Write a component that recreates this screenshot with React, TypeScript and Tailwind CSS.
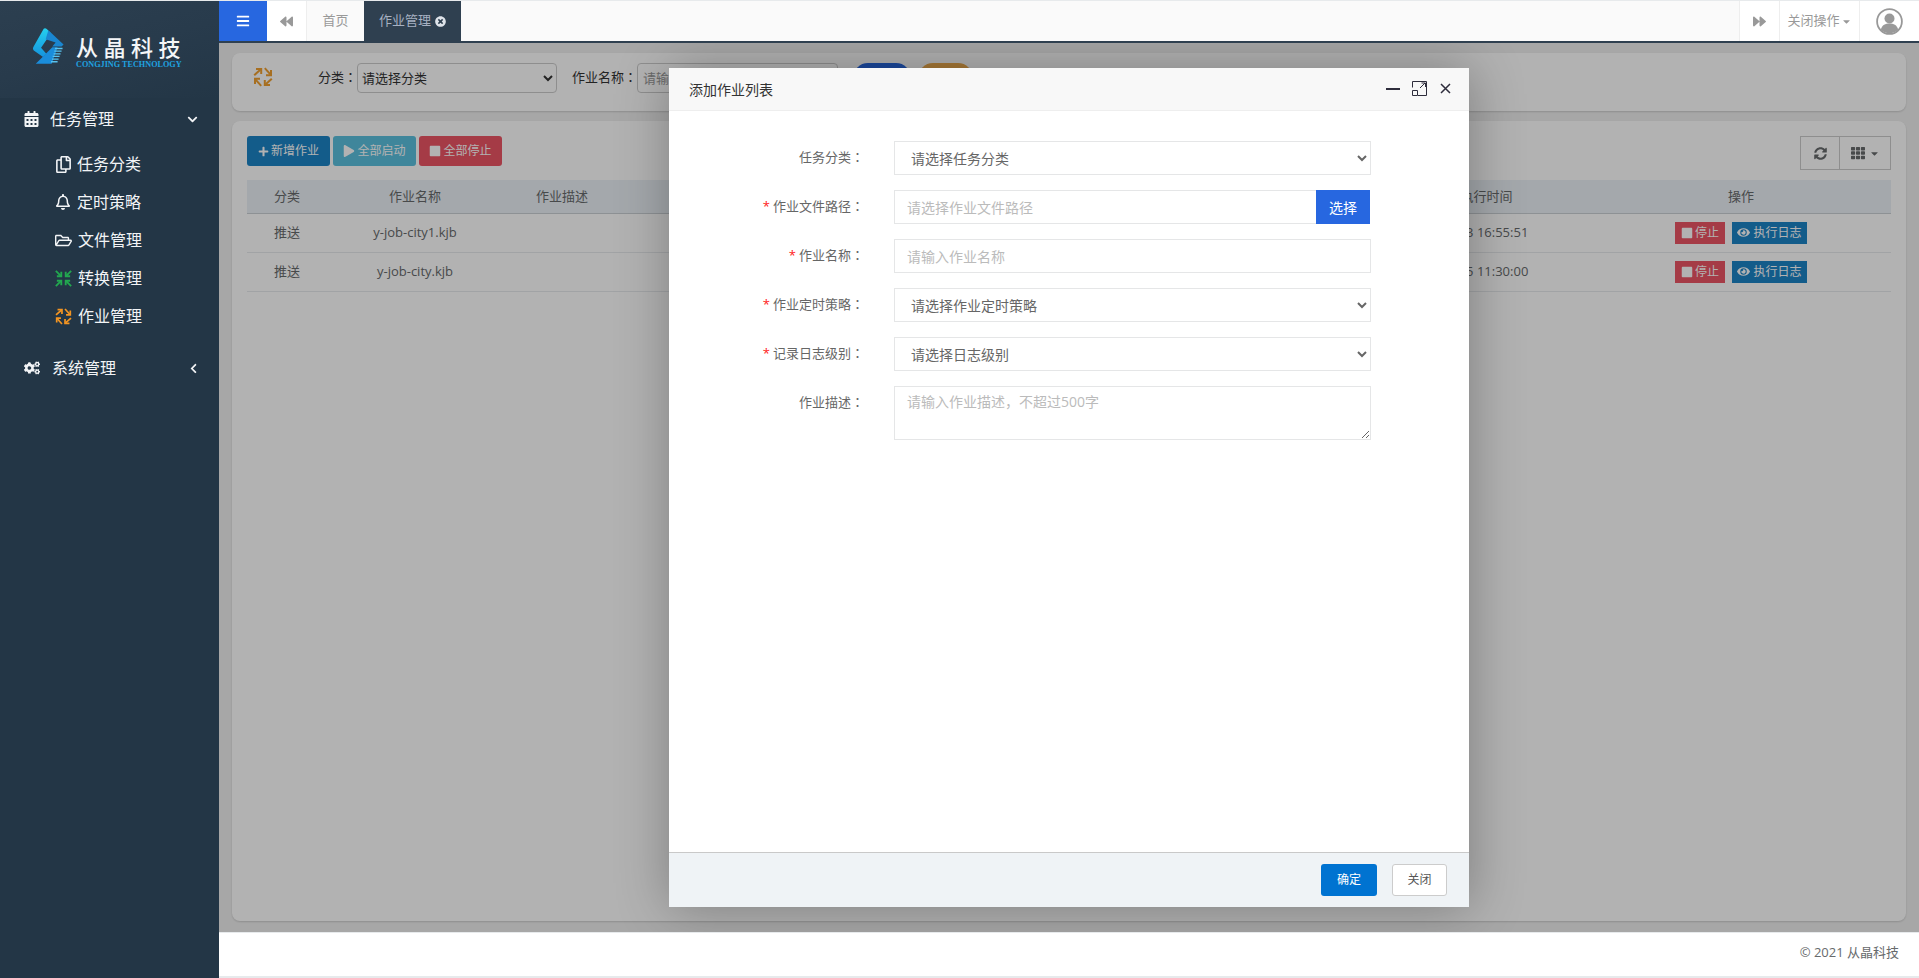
import {
  FaBackward,
  FaBars,
  FaCalendarAlt,
  FaCaretDown,
  FaChevronDown,
  FaChevronLeft,
  FaCogs,
  FaEye,
  FaForward,
  FaPlay,
  FaPlus,
  FaRegBell,
  FaRegCopy,
  FaRegFolderOpen,
  FaStop,
  FaSyncAlt,
  FaTh,
  FaTimesCircle,
} from 'react-icons/fa'

const font = '[font-family:"Open_Sans","Noto_Sans_CJK_SC",sans-serif]'

function Colon() {
  return <span className='[font-family:"Noto_Sans_CJK_TC",sans-serif]'>：</span>
}

function PinwheelIcon({ size, color }: { size: number; color: string }) {
  return (
    <svg width={size} height={size} viewBox="0 0 20 20" fill="none" stroke={color} strokeWidth="2">
      {[0, 90, 180, 270].map(r => (
        <g key={r} transform={`rotate(${r} 10 10)`}>
          <path d="M1.2 8.2 7.6 2.4" />
          <path d="M3 2H8.2V7" />
        </g>
      ))}
    </svg>
  )
}

function CompressIcon({ size, color }: { size: number; color: string }) {
  return (
    <svg width={size} height={size} viewBox="0 0 20 20" fill="none" stroke={color} strokeWidth="2.2">
      {[0, 90, 180, 270].map(r => (
        <g key={r} transform={`rotate(${r} 10 10)`}>
          <path d="M1 1 7.4 7.4" />
          <path d="M7.4 2.2V7.4H2.2" />
        </g>
      ))}
    </svg>
  )
}

function Logo() {
  return (
    <svg width="34" height="41" viewBox="12 10 100 124" className="shrink-0">
      <defs>
        <linearGradient id="logoTop" x1="0" y1="0" x2="0" y2="1">
          <stop offset="0" stopColor="#25d0ee" />
          <stop offset="1" stopColor="#1593dd" />
        </linearGradient>
      </defs>
      <path d="M46 12Q51 9 56 14L68 26 38 70 54 88 44 98 16 78Q11 72 16 65Z" fill="url(#logoTop)" />
      <path d="M60 17 106 60 100 66H72L82 54 52 44Z" fill="#1a86d0" />
      <path d="M72 68H88L70 118H22Z" fill="#1a8ddb" />
      <path d="M80 72H103M78 80H100M76 88H97M73 96H94M71 104H91M68 112H88" stroke="#58c2ee" strokeWidth="4" />
    </svg>
  )
}

function SideItem({ icon, label, textClass }: { icon: React.ReactNode; label: string; textClass: string }) {
  return (
    <div className="flex h-[38px] items-center pl-[55px] text-[16px] text-[#f2f4f6]">
      <span className="flex w-[17px] justify-start">{icon}</span>
      <span className={textClass}>{label}</span>
    </div>
  )
}

function Sidebar() {
  return (
    <aside className="w-[219px] shrink-0 bg-[#233646]">
      <div className="flex h-[97px] bg-[linear-gradient(165deg,#2c3f50_0%,#283b4c_50%,#233646_100%)] pl-[32px] pt-[27px]">
        <Logo />
        <div className="ml-[10px] mt-[8px]">
          <div className="text-[22px] leading-[22px] font-medium tracking-[5.5px] whitespace-nowrap text-[#f4f6f8]">从晶科技</div>
          <div className="mt-[3px] text-[8.2px] leading-[8px] font-bold whitespace-nowrap text-[#1fa3e0] [font-family:'Liberation_Serif',serif]">
            CONGJING TECHNOLOGY
          </div>
        </div>
      </div>
      <div className="flex h-[42px] items-center pl-[24px] pr-[21px] text-[16px] text-[#f2f4f6]">
        <FaCalendarAlt size={16} className="w-[15px]" />
        <span className="ml-[11px] flex-1">任务管理</span>
        <FaChevronDown size={11} />
      </div>
      <div className="mt-[5px]">
        <SideItem icon={<FaRegCopy size={17} />} label="任务分类" textClass="ml-[5px]" />
        <SideItem icon={<FaRegBell size={16} />} label="定时策略" textClass="ml-[5px]" />
        <SideItem icon={<FaRegFolderOpen size={17} />} label="文件管理" textClass="ml-[6px]" />
        <SideItem icon={<CompressIcon size={17} color="#22a84f" />} label="转换管理" textClass="ml-[6px]" />
        <SideItem icon={<PinwheelIcon size={17} color="#f39522" />} label="作业管理" textClass="ml-[6px]" />
      </div>
      <div className="mt-[12px] flex h-[42px] items-center pl-[24px] pr-[20px] text-[16px] text-[#f2f4f6]">
        <FaCogs size={16} />
        <span className="ml-[12px] flex-1">系统管理</span>
        <FaChevronLeft size={11} />
      </div>
    </aside>
  )
}

function TopBar() {
  return (
    <header className="flex h-[42px] shrink-0 border-b-2 border-[#2f4050] bg-[#fafafa] text-[13px]">
      <div className="flex w-[48px] items-center justify-center bg-[#2767e0] text-white">
        <FaBars size={14} />
      </div>
      <div className="flex w-[40px] items-center justify-center border-r border-[#eeeeee] bg-white text-[#999999]">
        <FaBackward size={13} />
      </div>
      <div className="flex w-[57px] items-center justify-center text-[#999999]">首页</div>
      <div className="flex w-[97px] items-center justify-center gap-[4px] bg-[#2f4050] text-[#a7b1c2]">
        作业管理
        <FaTimesCircle size={11} className="text-[#dfe4ea]" />
      </div>
      <div className="flex-1" />
      <div className="flex w-[40px] items-center justify-center border-l border-[#eeeeee] bg-white text-[#999999]">
        <FaForward size={13} />
      </div>
      <div className="flex w-[80px] items-center justify-center gap-[1px] border-l border-[#eeeeee] bg-white text-[#999999]">
        关闭操作
        <FaCaretDown size={11} />
      </div>
      <div className="flex w-[60px] items-center justify-center border-l border-[#eeeeee] bg-white">
        <svg width="27" height="27" viewBox="0 0 27 27">
          <circle cx="13.5" cy="13.5" r="12.4" fill="#fff" stroke="#999" strokeWidth="1.8" />
          <circle cx="13.5" cy="10.5" r="5" fill="#999" />
          <path d="M4.8 21.5C6 17 9.5 15.5 13.5 15.5S21 17 22.2 21.5C20 24 17 25.2 13.5 25.2S7 24 4.8 21.5Z" fill="#999" />
        </svg>
      </div>
    </header>
  )
}

function ToolBtn({ icon, label, color }: { icon: React.ReactNode; label: string; color: string }) {
  return (
    <button className={`flex h-[30px] w-[83px] items-center justify-center gap-[2px] rounded-[3px] text-[12px] text-white ${color}`}>
      {icon}
      {label}
    </button>
  )
}

const rows = [
  { type: '推送', name: 'y-job-city1.kjb', time: '2021-03-23 16:55:51' },
  { type: '推送', name: 'y-job-city.kjb', time: '2021-03-25 11:30:00' },
]

function JobTable() {
  return (
    <table className="w-full table-fixed text-center text-[13px] text-[#676a6c]">
      <colgroup>
        <col className="w-[80px]" />
        <col className="w-[176px]" />
        <col className="w-[118px]" />
        <col />
        <col className="w-[248px]" />
        <col className="w-[300px]" />
      </colgroup>
      <thead>
        <tr className="h-[33px] border-b border-[#cbd0d4] bg-[#ebf1f6]">
          <th className="font-normal">分类</th>
          <th className="font-normal">作业名称</th>
          <th className="font-normal">作业描述</th>
          <th className="font-normal" />
          <th className="font-normal">上一次执行时间</th>
          <th className="font-normal">操作</th>
        </tr>
      </thead>
      <tbody>
        {rows.map(r => (
          <tr key={r.name} className="h-[39px] border-b border-[#e7eaec]">
            <td>{r.type}</td>
            <td>{r.name}</td>
            <td />
            <td />
            <td>{r.time}</td>
            <td>
              <div className="flex justify-center gap-[7px] text-[12px] text-white">
                <span className="flex h-[22px] w-[50px] items-center justify-center gap-[2px] bg-[#ed5565]">
                  <FaStop size={12} />
                  停止
                </span>
                <span className="flex h-[22px] w-[75px] items-center justify-center gap-[3px] bg-[#1c84c6]">
                  <FaEye size={13} />
                  执行日志
                </span>
              </div>
            </td>
          </tr>
        ))}
      </tbody>
    </table>
  )
}

function Content() {
  return (
    <div className="flex h-full flex-col gap-[10px] bg-[#f0f0f0] pb-[11px] pl-[13px] pr-[13px] pt-[10px]">
      <section className="flex h-[58px] shrink-0 items-start rounded-[8px] bg-white pl-[20px] pt-[10px] text-[13px] text-[#333333] shadow-[0_1px_2px_rgba(0,0,0,0.15)]">
        <span className="mt-[4px] ml-px">
          <PinwheelIcon size={20} color="#f0a030" />
        </span>
        <label className="ml-[45px] leading-[27px]">分类<Colon /></label>
        <select className="h-[30px] w-[200px] rounded-[4px] border border-[#cccccc] bg-white text-[13px]">
          <option>请选择分类</option>
        </select>
        <label className="ml-[15px] leading-[27px]">作业名称<Colon /></label>
        <input placeholder="请输入作业名称" className="h-[30px] w-[201px] rounded-[4px] border border-[#cccccc] px-[5px] placeholder:text-[#999999]" />
        <div className="ml-[15px] h-[30px] w-[58px] rounded-[15px] bg-[#2767e0]" />
        <div className="ml-[7px] h-[30px] w-[55px] rounded-[15px] bg-[#f0ad4e]" />
      </section>
      <section className="min-h-0 flex-1 rounded-[8px] bg-white px-[15px] pt-[15px] shadow-[0_1px_2px_rgba(0,0,0,0.15)]">
        <div className="mb-[10px] flex h-[34px] items-start justify-between">
          <div className="flex gap-[3px]">
            <ToolBtn icon={<FaPlus size={11} />} label="新增作业" color="bg-[#1c84c6]" />
            <ToolBtn icon={<FaPlay size={12} />} label="全部启动" color="bg-[#5bc0de]" />
            <ToolBtn icon={<FaStop size={12} />} label="全部停止" color="bg-[#ed5565]" />
          </div>
          <div className="flex h-[34px] border border-[#cccccc] text-[#676a6c]">
            <div className="flex w-[39px] items-center justify-center border-r border-[#cccccc]">
              <FaSyncAlt size={13} />
            </div>
            <div className="flex w-[50px] items-center justify-center gap-[4px]">
              <FaTh size={14} />
              <FaCaretDown size={11} />
            </div>
          </div>
        </div>
        <JobTable />
      </section>
    </div>
  )
}

function Field({ label, required, children }: { label: string; required?: boolean; children: React.ReactNode }) {
  return (
    <div className="mb-[15px] flex">
      <label className="w-[195px] text-right text-[13px] leading-[31px] text-[#666666]">
        {required && <span className="mr-[3px] text-[#ff2020]">*</span>}
        {label}
        <Colon />
      </label>
      <div className="ml-[30px] w-[477px]">{children}</div>
    </div>
  )
}

const fieldClass = 'block h-[34px] w-full border border-[#e5e6e7] bg-white text-[14px] text-[#666666]'

function JobModal() {
  return (
    <div className="absolute left-[450px] top-[25px] flex h-[839px] w-[800px] flex-col bg-white shadow-[1px_1px_50px_rgba(0,0,0,0.3)]">
      <div className="flex h-[43px] shrink-0 items-center border-b border-[#eeeeee] bg-[#f8f8f8] pl-[20px] pr-[18px] text-[14px] text-[#333333]">
        <span className="flex-1">添加作业列表</span>
        <svg width="66" height="16" viewBox="0 0 66 16" fill="none" stroke="#2e2d3c">
          <path d="M1 8H15" strokeWidth="2" />
          <path d="M27.5 6.5V.5H41.5V14.5H33M27.5 9.5H32.5V14.5H27.5ZM35 7 40 2M36.5 2H40.5V6" strokeWidth="1" />
          <path d="M56 3 65 12M65 3 56 12" strokeWidth="1.5" />
        </svg>
      </div>
      <div className="flex-1 pt-[30px]">
        <Field label="任务分类">
          <select className={`${fieldClass} px-[12px]`}>
            <option>请选择任务分类</option>
          </select>
        </Field>
        <Field label="作业文件路径" required>
          <div className="flex w-[476px]">
            <input placeholder="请选择作业文件路径" className="h-[34px] min-w-0 flex-1 border border-r-0 border-[#e5e6e7] px-[12px] text-[14px] placeholder:text-[#bbbbbb]" />
            <button className="h-[34px] w-[54px] bg-[#2767e0] text-[14px] text-white">选择</button>
          </div>
        </Field>
        <Field label="作业名称" required>
          <input placeholder="请输入作业名称" className={`${fieldClass} px-[12px] placeholder:text-[#bbbbbb]`} />
        </Field>
        <Field label="作业定时策略" required>
          <select className={`${fieldClass} px-[12px]`}>
            <option>请选择作业定时策略</option>
          </select>
        </Field>
        <Field label="记录日志级别" required>
          <select className={`${fieldClass} px-[12px]`}>
            <option>请选择日志级别</option>
          </select>
        </Field>
        <Field label="作业描述">
          <textarea placeholder="请输入作业描述，不超过500字" className="block h-[54px] w-full border border-[#e5e6e7] px-[12px] py-[4px] text-[14px] placeholder:text-[#bbbbbb]" />
        </Field>
      </div>
      <div className="flex h-[55px] shrink-0 items-center justify-end gap-[15px] border-t border-[#c9c9c9] bg-[#eff3f6] pr-[22px] text-[12px]">
        <button className="h-[32px] w-[56px] rounded-[3px] bg-[#0073d1] text-white">确定</button>
        <button className="h-[32px] w-[55px] rounded-[3px] border border-[#cccccc] bg-white text-[#555555]">关闭</button>
      </div>
    </div>
  )
}

export default function App() {
  return (
    <div className={`flex h-[978px] w-full overflow-hidden bg-[#e7eaec] pt-px ${font}`}>
      <Sidebar />
      <main className="flex min-w-0 flex-1 flex-col pb-[2px]">
        <TopBar />
        <div className="relative min-h-0 flex-1 overflow-hidden">
          <Content />
          <div className="absolute inset-0 bg-black/30" />
          <JobModal />
        </div>
        <footer className="flex h-[44px] shrink-0 items-center justify-end border-t border-[#e7eaec] bg-white pb-[3px] pr-[20px] text-[13px] text-[#676a6c]">
          © 2021 从晶科技
        </footer>
      </main>
    </div>
  )
}
